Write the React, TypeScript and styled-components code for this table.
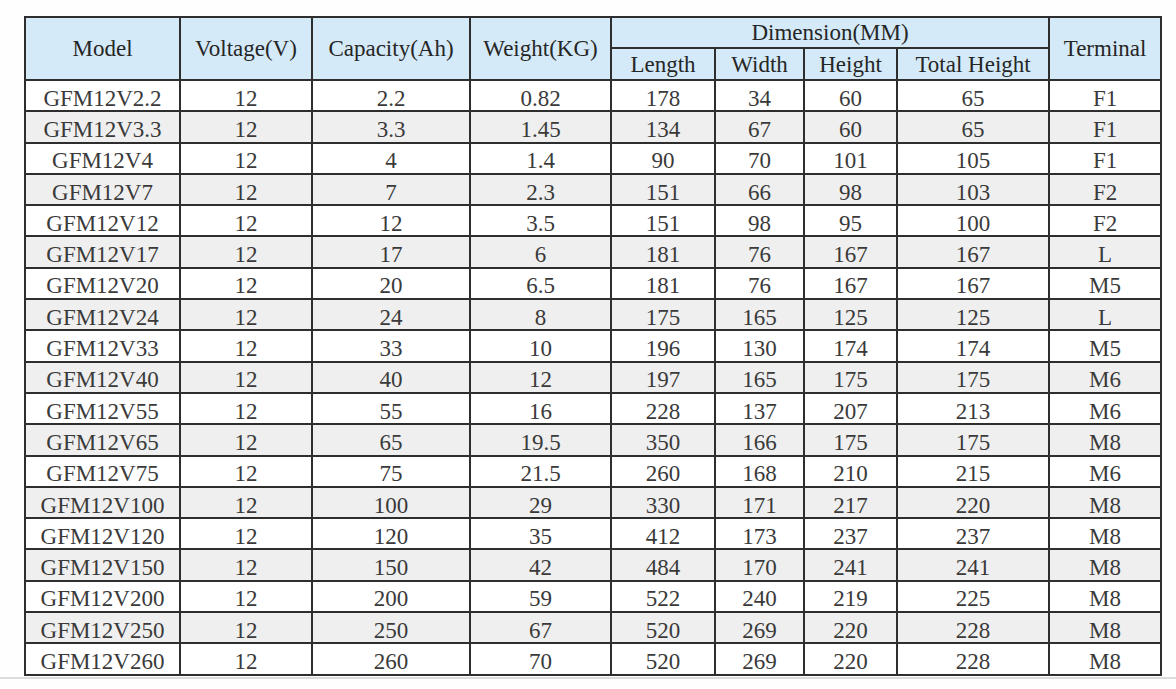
import React from "react";
import styled, { createGlobalStyle } from "styled-components";

const GlobalStyle = createGlobalStyle`
  html, body { margin: 0; padding: 0; background: #ffffff; }
  body { font-family: "Liberation Serif", "Times New Roman", serif; }
`;

const Page = styled.div`
  width: 1176px;
  height: 689px;
  box-sizing: border-box;
  padding: 16px 0 0 0;
  display: flex;
  flex-direction: column;
  background: #fefefe;
`;

const TableWrap = styled.div`
  padding-left: 24px;
`;

const Table = styled.table`
  border-collapse: collapse;
  table-layout: fixed;
  width: 1138px;
  font-family: "Liberation Serif", "Times New Roman", serif;
  font-size: 23px;
`;

const HeadCell = styled.th<{ $h: number }>`
  height: ${(p) => p.$h}px;
  box-sizing: border-box;
  padding: 0;
  border: 2px solid #2e2e2e;
  background: #d5eaf8;
  color: #262626;
  font-weight: normal;
  text-align: center;
  vertical-align: middle;
  white-space: nowrap;
  line-height: 1;
`;

const Row = styled.tr<{ $alt: boolean }>`
  background: ${(p) => (p.$alt ? "#efefef" : "#ffffff")};
`;

const Cell = styled.td`
  height: 31.3px;
  box-sizing: border-box;
  padding: 5px 0 0 0;
  border: 2px solid #2e2e2e;
  color: #3a3a3a;
  text-align: center;
  vertical-align: middle;
  white-space: nowrap;
  line-height: 1;
`;

const Divider = styled.div`
  margin-top: 1px;
  height: 0;
  border-top: 2px solid #dcdcdc;
`;

const widths = [155, 132, 158, 141, 104, 89, 93, 152, 112];

const rows: string[][] = [
  ["GFM12V2.2", "12", "2.2", "0.82", "178", "34", "60", "65", "F1"],
  ["GFM12V3.3", "12", "3.3", "1.45", "134", "67", "60", "65", "F1"],
  ["GFM12V4", "12", "4", "1.4", "90", "70", "101", "105", "F1"],
  ["GFM12V7", "12", "7", "2.3", "151", "66", "98", "103", "F2"],
  ["GFM12V12", "12", "12", "3.5", "151", "98", "95", "100", "F2"],
  ["GFM12V17", "12", "17", "6", "181", "76", "167", "167", "L"],
  ["GFM12V20", "12", "20", "6.5", "181", "76", "167", "167", "M5"],
  ["GFM12V24", "12", "24", "8", "175", "165", "125", "125", "L"],
  ["GFM12V33", "12", "33", "10", "196", "130", "174", "174", "M5"],
  ["GFM12V40", "12", "40", "12", "197", "165", "175", "175", "M6"],
  ["GFM12V55", "12", "55", "16", "228", "137", "207", "213", "M6"],
  ["GFM12V65", "12", "65", "19.5", "350", "166", "175", "175", "M8"],
  ["GFM12V75", "12", "75", "21.5", "260", "168", "210", "215", "M6"],
  ["GFM12V100", "12", "100", "29", "330", "171", "217", "220", "M8"],
  ["GFM12V120", "12", "120", "35", "412", "173", "237", "237", "M8"],
  ["GFM12V150", "12", "150", "42", "484", "170", "241", "241", "M8"],
  ["GFM12V200", "12", "200", "59", "522", "240", "219", "225", "M8"],
  ["GFM12V250", "12", "250", "67", "520", "269", "220", "228", "M8"],
  ["GFM12V260", "12", "260", "70", "520", "269", "220", "228", "M8"],
];

export default function App() {
  return (
    <>
      <GlobalStyle />
      <Page>
        <TableWrap>
          <Table>
            <colgroup>
              {widths.map((w, i) => (
                <col key={i} style={{ width: w }} />
              ))}
            </colgroup>
            <thead>
              <tr>
                <HeadCell $h={31} rowSpan={2}>Model</HeadCell>
                <HeadCell $h={31} rowSpan={2}>Voltage(V)</HeadCell>
                <HeadCell $h={31} rowSpan={2}>Capacity(Ah)</HeadCell>
                <HeadCell $h={31} rowSpan={2}>Weight(KG)</HeadCell>
                <HeadCell $h={31} colSpan={4}>Dimension(MM)</HeadCell>
                <HeadCell $h={31} rowSpan={2}>Terminal</HeadCell>
              </tr>
              <tr>
                <HeadCell $h={32}>Length</HeadCell>
                <HeadCell $h={32}>Width</HeadCell>
                <HeadCell $h={32}>Height</HeadCell>
                <HeadCell $h={32}>Total Height</HeadCell>
              </tr>
            </thead>
            <tbody>
              {rows.map((r, i) => (
                <Row key={r[0]} $alt={i % 2 === 1}>
                  {r.map((c, j) => (
                    <Cell key={j}>{c}</Cell>
                  ))}
                </Row>
              ))}
            </tbody>
          </Table>
        </TableWrap>
        <Divider />
      </Page>
    </>
  );
}
